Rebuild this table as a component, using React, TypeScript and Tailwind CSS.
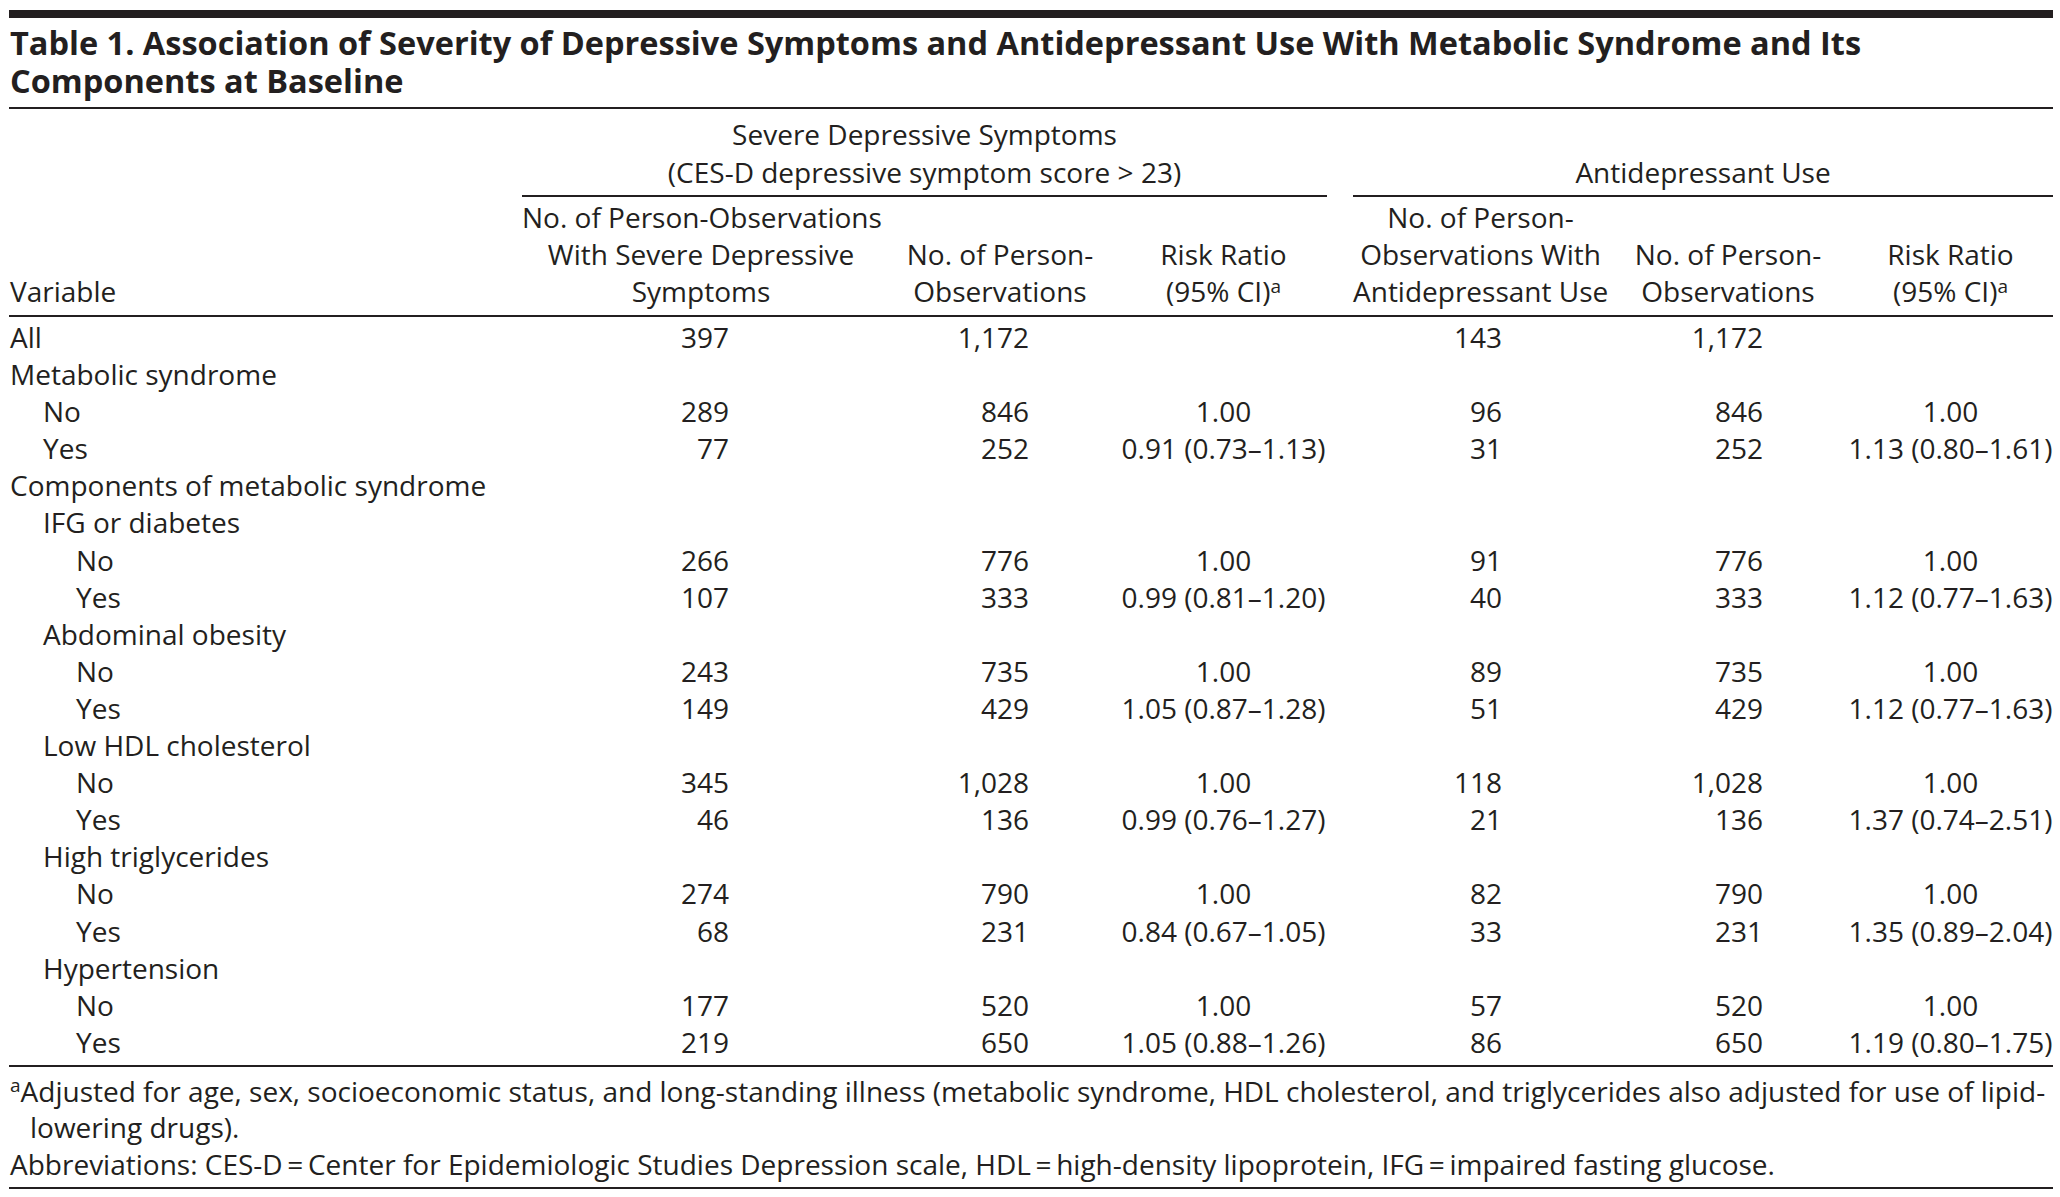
type Row = {
  label: string
  level: 0 | 1 | 2
  values?: string[]
}

const rows: Row[] = [
  { label: 'All', level: 0, values: ['397', '1,172', '', '143', '1,172', ''] },
  { label: 'Metabolic syndrome', level: 0 },
  { label: 'No', level: 1, values: ['289', '846', '1.00', '96', '846', '1.00'] },
  { label: 'Yes', level: 1, values: ['77', '252', '0.91 (0.73–1.13)', '31', '252', '1.13 (0.80–1.61)'] },
  { label: 'Components of metabolic syndrome', level: 0 },
  { label: 'IFG or diabetes', level: 1 },
  { label: 'No', level: 2, values: ['266', '776', '1.00', '91', '776', '1.00'] },
  { label: 'Yes', level: 2, values: ['107', '333', '0.99 (0.81–1.20)', '40', '333', '1.12 (0.77–1.63)'] },
  { label: 'Abdominal obesity', level: 1 },
  { label: 'No', level: 2, values: ['243', '735', '1.00', '89', '735', '1.00'] },
  { label: 'Yes', level: 2, values: ['149', '429', '1.05 (0.87–1.28)', '51', '429', '1.12 (0.77–1.63)'] },
  { label: 'Low HDL cholesterol', level: 1 },
  { label: 'No', level: 2, values: ['345', '1,028', '1.00', '118', '1,028', '1.00'] },
  { label: 'Yes', level: 2, values: ['46', '136', '0.99 (0.76–1.27)', '21', '136', '1.37 (0.74–2.51)'] },
  { label: 'High triglycerides', level: 1 },
  { label: 'No', level: 2, values: ['274', '790', '1.00', '82', '790', '1.00'] },
  { label: 'Yes', level: 2, values: ['68', '231', '0.84 (0.67–1.05)', '33', '231', '1.35 (0.89–2.04)'] },
  { label: 'Hypertension', level: 1 },
  { label: 'No', level: 2, values: ['177', '520', '1.00', '57', '520', '1.00'] },
  { label: 'Yes', level: 2, values: ['219', '650', '1.05 (0.88–1.26)', '86', '650', '1.19 (0.80–1.75)'] },
]

const indent = ['pl-[1px]', 'pl-[34px]', 'pl-[67px]']

// alignment of the six value columns (counts right-aligned, ratios centred)
const valueAlign = [
  'text-right pr-[151px]',
  'text-right pr-[91px]',
  'text-center',
  'text-right pr-[106px]',
  'text-right pr-[85px]',
  'text-center',
]

function Sup() {
  return <sup className="text-[19px]">a</sup>
}

export default function App() {
  return (
    <div className="min-h-screen bg-white font-['Open_Sans',sans-serif] text-[#231f20]">
      <div className="pl-[9px] pr-[7px] pt-[10px]">
        <div className="h-[8px] bg-[#231f20]" />

        <h1 className="mt-[6px] pl-[1px] text-[32.5px] font-bold leading-[38px]">
          Table 1. Association of Severity of Depressive Symptoms and Antidepressant Use With Metabolic Syndrome and Its
          <br />
          Components at Baseline
        </h1>

        <table className="mt-[7px] w-full table-fixed border-separate border-spacing-0 border-t-2 border-[#231f20] text-[28px]">
          <colgroup>
            <col className="w-[513px]" />
            <col className="w-[358px]" />
            <col className="w-[240px]" />
            <col className="w-[207px]" />
            <col className="w-[26px]" />
            <col className="w-[255px]" />
            <col className="w-[240px]" />
            <col className="w-[205px]" />
          </colgroup>
          <thead className="font-normal">
            {/* Group headers */}
            <tr className="leading-[38px]">
              <th className="p-0" />
              <th
                colSpan={3}
                className="border-b-2 border-[#231f20] p-0 pb-[4px] pt-[6px] text-center align-bottom font-normal"
              >
                Severe Depressive Symptoms
                <br />
                (CES-D depressive symptom score &gt; 23)
              </th>
              <th className="p-0" />
              <th
                colSpan={3}
                className="border-b-2 border-[#231f20] p-0 pb-[4px] pt-[6px] text-center align-bottom font-normal"
              >
                Antidepressant Use
              </th>
            </tr>

            {/* Column headers */}
            <tr className="leading-[37px]">
              <th className="border-b-2 border-[#231f20] p-0 pb-[5px] pl-[1px] pt-[2px] text-left align-bottom font-normal">
                Variable
              </th>
              <th className="border-b-2 border-[#231f20] p-0 pb-[5px] pt-[2px] text-center align-bottom font-normal whitespace-nowrap">
                No. of Person-Observations
                <br />
                With Severe Depressive
                <br />
                Symptoms
              </th>
              <th className="border-b-2 border-[#231f20] p-0 pb-[5px] pt-[2px] text-center align-bottom font-normal whitespace-nowrap">
                No. of Person-
                <br />
                Observations
              </th>
              <th className="border-b-2 border-[#231f20] p-0 pb-[5px] pt-[2px] text-center align-bottom font-normal whitespace-nowrap">
                Risk Ratio
                <br />
                (95% CI)
                <Sup />
              </th>
              <th className="border-b-2 border-[#231f20] p-0" />
              <th className="border-b-2 border-[#231f20] p-0 pb-[5px] pt-[2px] text-center align-bottom font-normal whitespace-nowrap">
                No. of Person-
                <br />
                Observations With
                <br />
                Antidepressant Use
              </th>
              <th className="border-b-2 border-[#231f20] p-0 pb-[5px] pt-[2px] text-center align-bottom font-normal whitespace-nowrap">
                No. of Person-
                <br />
                Observations
              </th>
              <th className="border-b-2 border-[#231f20] p-0 pb-[5px] pt-[2px] text-center align-bottom font-normal whitespace-nowrap">
                Risk Ratio
                <br />
                (95% CI)
                <Sup />
              </th>
            </tr>
          </thead>

          <tbody className="leading-[37.1px]">
            {rows.map((row, i) => {
              const first = i === 0
              const last = i === rows.length - 1
              const edge = last
                ? 'pb-[4px] border-b-2 border-[#231f20]'
                : first
                  ? 'pt-[2px]'
                  : ''
              const vals = row.values ?? ['', '', '', '', '', '']
              return (
                <tr key={i}>
                  <td className={`p-0 whitespace-nowrap ${indent[row.level]} ${edge}`}>{row.label}</td>
                  {vals.slice(0, 3).map((v, j) => (
                    <td key={j} className={`p-0 whitespace-nowrap ${valueAlign[j]} ${edge}`}>
                      {v}
                    </td>
                  ))}
                  <td className={`p-0 ${edge}`} />
                  {vals.slice(3).map((v, j) => (
                    <td key={j + 3} className={`p-0 whitespace-nowrap ${valueAlign[j + 3]} ${edge}`}>
                      {v}
                    </td>
                  ))}
                </tr>
              )
            })}
          </tbody>
        </table>

        {/* Footnotes */}
        <div className="border-b-2 border-[#231f20] pb-[5px] pt-[6px] text-[28px] leading-[36.5px]">
          <p className="pl-[21px] -indent-[20px]">
            <Sup />
            Adjusted for age, sex, socioeconomic status, and long-standing illness (metabolic syndrome, HDL cholesterol, and triglycerides also adjusted for use of lipid-
            <br />
            lowering drugs).
          </p>
          <p className="pl-[1px]">
            Abbreviations: CES-D{'\u2009=\u2009'}Center for Epidemiologic Studies Depression scale, HDL{'\u2009=\u2009'}high-density lipoprotein, IFG{'\u2009=\u2009'}impaired fasting glucose.
          </p>
        </div>
      </div>
    </div>
  )
}
